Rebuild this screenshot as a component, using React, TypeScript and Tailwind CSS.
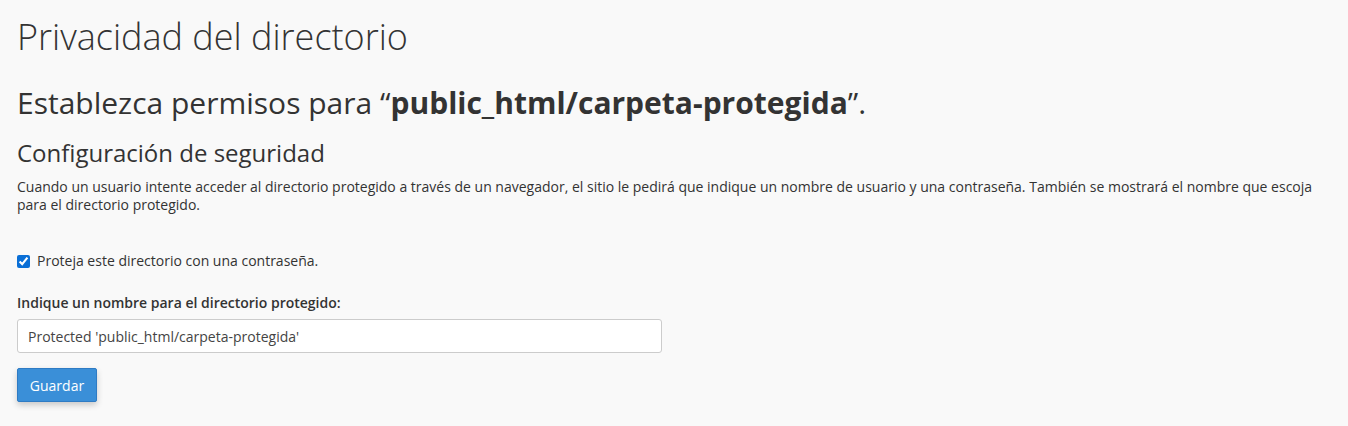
export default function App() {
  return (
    <div
      className="min-h-[426px] w-full bg-[#f9f9f9] px-[17px] text-[#333]"
      style={{ fontFamily: '"Open Sans", "Liberation Sans", sans-serif' }}
    >
      <h1 className="pt-[14px] text-[36px] leading-[46px] font-light">
        Privacidad del directorio
      </h1>
      <h2 className="mt-[23px] text-[30px] leading-[40px]">
        Establezca permisos para “<strong className="font-bold">public_html/carpeta-protegida</strong>”.
      </h2>
      <h3 className="mt-[14px] text-[24px] leading-[32px]">
        Configuración de seguridad
      </h3>
      <p className="mt-[9px] text-[14px] leading-[18px]">
        Cuando un usuario intente acceder al directorio protegido a través de un navegador, el sitio le pedirá que indique un nombre de usuario y una contraseña. También se mostrará el nombre que escoja para el directorio protegido.
      </p>
      <label className="mt-[38px] flex items-center gap-[7px] text-[14px] leading-[18px]">
        <input type="checkbox" defaultChecked className="h-[13px] w-[13px] accent-[#0a6fd6]" />
        Proteja este directorio con una contraseña.
      </label>
      <div className="mt-[24px] text-[14px] leading-[18px] font-semibold">
        Indique un nombre para el directorio protegido:
      </div>
      <input
        type="text"
        defaultValue="Protected 'public_html/carpeta-protegida'"
        className="mt-[7px] block h-[34px] w-[645px] rounded-[3px] border border-[#ccc] bg-white px-[10px] text-[14px] text-[#444] outline-none"
      />
      <button className="mt-[15px] h-[34px] w-[80px] rounded-[2px] border border-[#2e7bc4] bg-[#3a8fd8] text-[14px] text-white shadow-[0_3px_6px_rgba(0,0,0,0.2)]">
        Guardar
      </button>
    </div>
  );
}
